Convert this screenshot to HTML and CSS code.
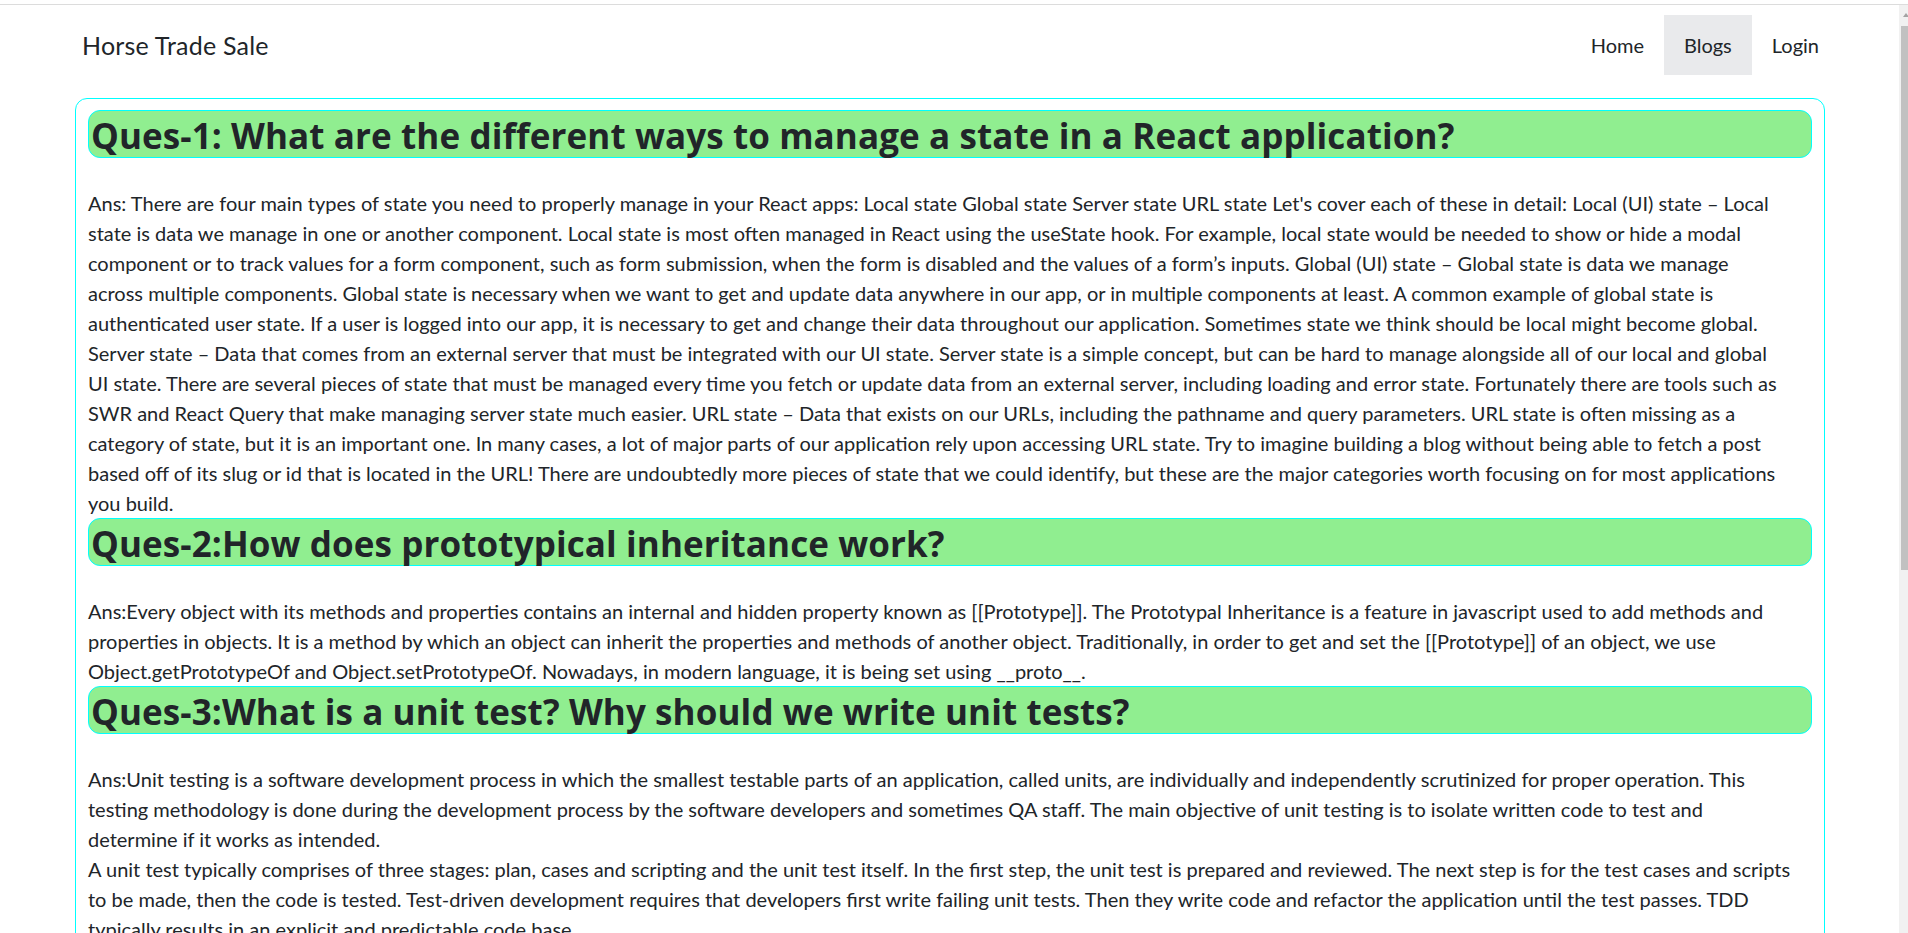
FILE: index.html
```html
<!DOCTYPE html>
<html lang="en">
<head>
<meta charset="utf-8">
<title>Horse Trade Sale</title>
<link rel="stylesheet" href="styles.css">
</head>
<body>
<div class="topline"></div>
<nav class="navbar">
  <a class="brand" href="#">Horse Trade Sale</a>
  <div class="nav-links">
    <a class="nav-link" href="#">Home</a>
    <a class="nav-link active" href="#">Blogs</a>
    <a class="nav-link" href="#">Login</a>
  </div>
</nav>
<main class="card">
  <h3 class="q">Ques-1: What are the different ways to manage a state in a React application?</h3>
  <p class="a">Ans: There are four main types of state you need to properly manage in your React apps: Local state Global state Server state URL state Let's cover each of these in detail: Local (UI) state – Local<br>state is data we manage in one or another component. Local state is most often managed in React using the useState hook. For example, local state would be needed to show or hide a modal<br>component or to track values for a form component, such as form submission, when the form is disabled and the values of a form’s inputs. Global (UI) state – Global state is data we manage<br>across multiple components. Global state is necessary when we want to get and update data anywhere in our app, or in multiple components at least. A common example of global state is<br>authenticated user state. If a user is logged into our app, it is necessary to get and change their data throughout our application. Sometimes state we think should be local might become global.<br>Server state – Data that comes from an external server that must be integrated with our UI state. Server state is a simple concept, but can be hard to manage alongside all of our local and global<br>UI state. There are several pieces of state that must be managed every time you fetch or update data from an external server, including loading and error state. Fortunately there are tools such as<br>SWR and React Query that make managing server state much easier. URL state – Data that exists on our URLs, including the pathname and query parameters. URL state is often missing as a<br>category of state, but it is an important one. In many cases, a lot of major parts of our application rely upon accessing URL state. Try to imagine building a blog without being able to fetch a post<br>based off of its slug or id that is located in the URL! There are undoubtedly more pieces of state that we could identify, but these are the major categories worth focusing on for most applications<br>you build.</p>
  <h3 class="q">Ques-2:How does prototypical inheritance work?</h3>
  <p class="a">Ans:Every object with its methods and properties contains an internal and hidden property known as [[Prototype]]. The Prototypal Inheritance is a feature in javascript used to add methods and<br>properties in objects. It is a method by which an object can inherit the properties and methods of another object. Traditionally, in order to get and set the [[Prototype]] of an object, we use<br>Object.getPrototypeOf and Object.setPrototypeOf. Nowadays, in modern language, it is being set using __proto__.</p>
  <h3 class="q">Ques-3:What is a unit test? Why should we write unit tests?</h3>
  <p class="a">Ans:Unit testing is a software development process in which the smallest testable parts of an application, called units, are individually and independently scrutinized for proper operation. This<br>testing methodology is done during the development process by the software developers and sometimes QA staff. The main objective of unit testing is to isolate written code to test and<br>determine if it works as intended.<br>A unit test typically comprises of three stages: plan, cases and scripting and the unit test itself. In the first step, the unit test is prepared and reviewed. The next step is for the test cases and scripts<br>to be made, then the code is tested. Test-driven development requires that developers first write failing unit tests. Then they write code and refactor the application until the test passes. TDD<br>typically results in an explicit and predictable code base.</p>
</main>
<div class="scrollbar"><span class="arrow"></span><div class="thumb"></div></div>
</body>
</html>
```

FILE: styles.css
```css
html, body {
  margin: 0;
  padding: 0;
  height: 100%;
  overflow: hidden;
  background: #fff;
}
body {
  font-family: Lato, "Liberation Sans", sans-serif;
  font-size: 20px;
  line-height: 30px;
  color: #212529;
}
.topline {
  margin-top: 4px;
  height: 1px;
  background: #dcdcdc;
}
.navbar {
  display: flex;
  justify-content: space-between;
  align-items: center;
  padding: 10px 69px 10px 82px;
}
.brand {
  font-size: 25px;
  line-height: 37px;
  letter-spacing: 0.2px;
  color: #212529;
  text-decoration: none;
}
.nav-links {
  display: flex;
}
.nav-link {
  display: block;
  padding: 15px 20px;
  line-height: 30px;
  color: #212529;
  text-decoration: none;
}
.nav-link.active {
  background: #e9eaec;
}
.card {
  display: block;
  margin: 13px 83px 0 75px;
  border: 1px solid #00ffff;
  border-radius: 12px;
  padding: 11px 12px 0 12px;
}
.q {
  margin: 0 0 30px;
  padding: 4px 0 0 2px;
  background: #90ee90;
  border: 1px solid #00ffff;
  border-radius: 12px;
  font-family: "Open Sans", Lato, sans-serif;
  font-size: 35px;
  line-height: 42px;
  font-weight: 700;
  letter-spacing: 0.1px;
  color: #212529;
}
.a {
  margin: 0;
  white-space: nowrap;
}
.scrollbar {
  position: fixed;
  right: 0;
  top: 5px;
  bottom: 0;
  width: 9px;
  background: #f1f1f1;
}
.arrow {
  position: absolute;
  left: 4px;
  top: 8px;
  width: 0;
  height: 0;
  border-left: 3px solid transparent;
  border-right: 3px solid transparent;
  border-bottom: 4px solid #a3a3a3;
}
.thumb {
  position: absolute;
  left: 2px;
  right: 0;
  top: 21px;
  height: 544px;
  background: #c1c1c1;
}
```
